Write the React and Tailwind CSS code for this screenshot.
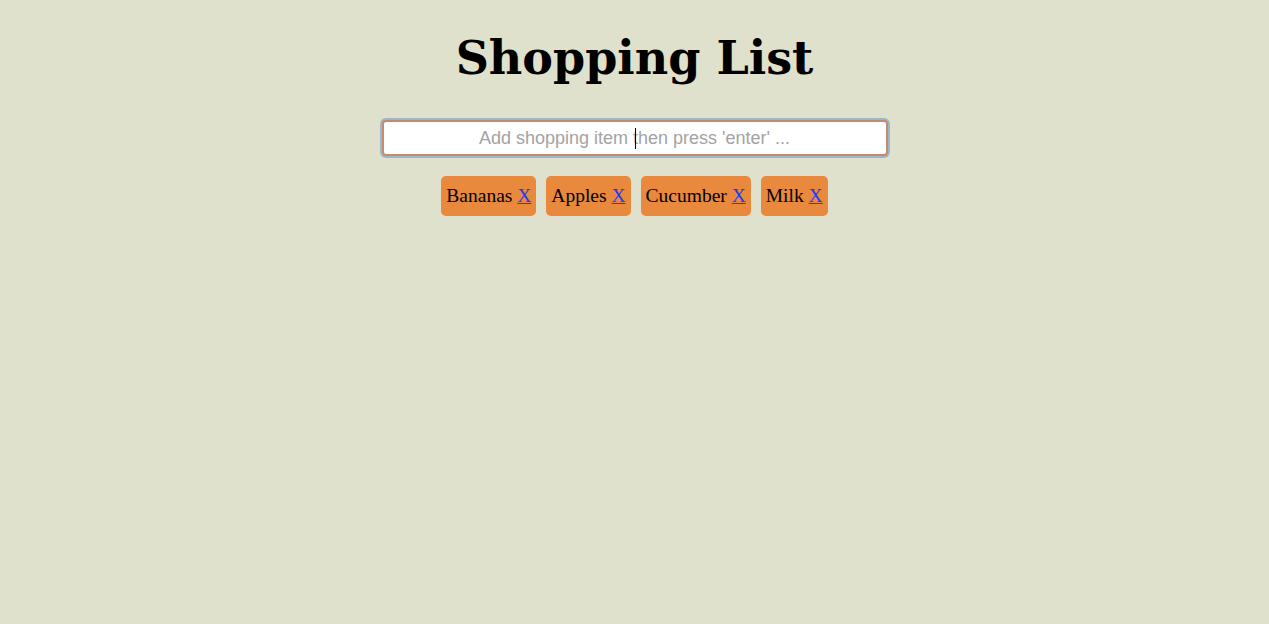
export default function App() {
  const items = ["Bananas", "Apples", "Cucumber", "Milk"];
  return (
    <div className="min-h-[624px] w-full bg-[#e0e1cc] flex flex-col items-center">
      <h1 className="mt-[27px] text-[46px] leading-[62px] font-bold text-black" style={{ fontFamily: '"DejaVu Serif", Georgia, serif' }}>
        Shopping List
      </h1>
      <div className="relative mt-[31px]">
        <input
          className="w-[506px] h-[36px] bg-white border-2 border-[#c98a6a] rounded-[4px] text-center text-[18px] placeholder:text-[#a3a3a3] outline-none shadow-[0_0_0_2px_#9bb7cc]"
          style={{ fontFamily: '"Liberation Sans", Arial, sans-serif' }}
          placeholder="Add shopping item then press 'enter' ..."
        />
        <div className="absolute left-[253px] top-[8px] w-px h-[21px] bg-black" />
      </div>
      <div className="mt-[20px] flex gap-[10px]">
        {items.map((it) => (
          <div key={it} className="bg-[#e8893e] rounded-[5px] h-[40px] px-[5px] flex items-center text-[19.5px] text-black" style={{ fontFamily: '"Liberation Serif", Georgia, serif' }}>
            {it}&nbsp;<a href="#" className="text-[#1a3cff] underline">X</a>
          </div>
        ))}
      </div>
    </div>
  );
}
